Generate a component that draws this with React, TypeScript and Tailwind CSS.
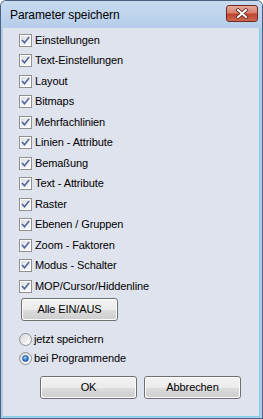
import React from "react";

const items = [
  "Einstellungen",
  "Text-Einstellungen",
  "Layout",
  "Bitmaps",
  "Mehrfachlinien",
  "Linien - Attribute",
  "Bemaßung",
  "Text - Attribute",
  "Raster",
  "Ebenen / Gruppen",
  "Zoom - Faktoren",
  "Modus - Schalter",
  "MOP/Cursor/Hiddenline",
];

function CheckBox() {
  return (
    <div className="w-[13px] h-[13px] border border-[#8e8f8f] bg-white p-[1px] shrink-0">
      <div className="w-full h-full bg-gradient-to-br from-[#dcdee2] to-[#fbfbfb] relative">
        <svg
          width="11"
          height="11"
          viewBox="0 0 11 11"
          className="absolute -left-[1px] -top-[1px]"
        >
          <path
            d="M2.5 5.6 L4.5 7.8 L8.7 2.5"
            fill="none"
            stroke="#5063a0"
            strokeWidth="1.6"
            strokeLinecap="square"
            strokeLinejoin="miter"
          />
        </svg>
      </div>
    </div>
  );
}

function Radio({ checked }: { checked?: boolean }) {
  return (
    <div className="w-[13px] h-[13px] rounded-full border border-[#8e8f8f] bg-gradient-to-br from-[#d6d8dc] to-[#ffffff] flex items-center justify-center shrink-0">
      {checked && (
        <div className="w-[7px] h-[7px] rounded-full bg-[radial-gradient(circle_at_40%_35%,#b8dcfb_0%,#3c86d4_45%,#1c4f9c_100%)] border border-[#2a5fa8]" />
      )}
    </div>
  );
}

function Button({ label, w }: { label: string; w: string }) {
  return (
    <div
      className={`${w} h-[23px] rounded-[3px] border border-[#707070] p-[1px] bg-[#fcfcfc]`}
    >
      <div className="w-full h-full rounded-[2px] bg-[linear-gradient(to_bottom,#f2f2f2_0%,#ebebeb_50%,#dddddd_51%,#cfcfcf_100%)] flex items-center justify-center text-[11px] text-black leading-none">
        {label}
      </div>
    </div>
  );
}

export default function App() {
  return (
    <div
      className="w-[263px] h-[419px] bg-[#4a6282] p-[1px] rounded-t-[6px]"
      style={{ fontFamily: '"Liberation Sans", Arial, sans-serif' }}
    >
      <div className="w-full h-full rounded-t-[5px] bg-[#b4cbe6] flex flex-col">
        {/* Title bar */}
        <div className="h-[27px] relative rounded-t-[5px] bg-[linear-gradient(to_bottom,#c7daef_0%,#c0d5ee_45%,#b6cde9_100%)] flex items-center pl-[9px]">
          <span className="text-[12px] text-black tracking-[-0.1px] leading-none mt-[1px]">
            Parameter speichern
          </span>
          <div className="absolute left-[225px] top-[4px] w-[32px] h-[17px] rounded-[3px] border border-[#6e2a24] bg-[linear-gradient(to_bottom,#e9a99b_0%,#d7826f_45%,#c1442e_55%,#cc6a50_100%)] flex items-center justify-center">
            <svg width="14" height="11" viewBox="0 0 14 11">
              <path
                d="M3 2 L11 9 M11 2 L3 9"
                stroke="#5a2620"
                strokeWidth="3.6"
                strokeLinecap="square"
              />
              <path
                d="M3 2 L11 9 M11 2 L3 9"
                stroke="#ffffff"
                strokeWidth="2"
                strokeLinecap="square"
              />
            </svg>
          </div>
        </div>
        {/* Client */}
        <div className="flex-1 ml-[2px] mr-[2px] mb-[1px] bg-[#dfe3ee] border-r border-b border-[#78cfee] flex flex-col pt-[6px] pl-[16px] text-[11px] text-black tracking-[-0.1px]">
          {items.map((t, i) => (
            <div
              key={t}
              className={`h-[13px] flex items-center gap-[3px] ${
                i % 2 === 0 ? "mb-[7px]" : "mb-[8px]"
              }`}
            >
              <CheckBox />
              <span className="leading-[13px] whitespace-nowrap">{t}</span>
            </div>
          ))}
          <div className="-mt-[2px] ml-[2px]">
            <Button label="Alle EIN/AUS" w="w-[97px]" />
          </div>
          <div className="mt-[12px] h-[13px] flex items-center gap-[2px]">
            <Radio />
            <span className="leading-[13px]">jetzt speichern</span>
          </div>
          <div className="mt-[6px] h-[13px] flex items-center gap-[2px]">
            <Radio checked />
            <span className="leading-[13px]">bei Programmende</span>
          </div>
          <div className="mt-[11px] ml-[21px] flex gap-[7px]">
            <Button label="OK" w="w-[97px]" />
            <Button label="Abbrechen" w="w-[97px]" />
          </div>
        </div>
      </div>
    </div>
  );
}
